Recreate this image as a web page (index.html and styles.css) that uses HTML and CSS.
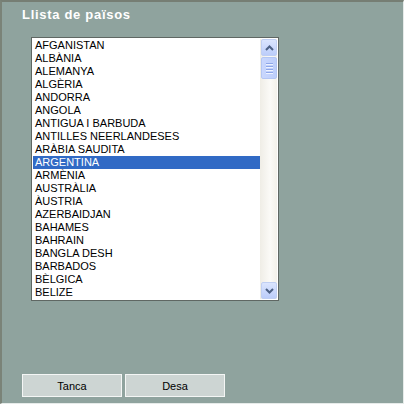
FILE: index.html
```html
<!DOCTYPE html>
<html>
<head>
<meta charset="utf-8">
<link rel="stylesheet" href="styles.css">
</head>
<body>
<div class="window">
  <div class="title">Llista de països</div>
  <div class="listbox">
    <ul class="items">
      <li>AFGANISTAN</li>
      <li>ALBÀNIA</li>
      <li>ALEMANYA</li>
      <li>ALGÈRIA</li>
      <li>ANDORRA</li>
      <li>ANGOLA</li>
      <li>ANTIGUA I BARBUDA</li>
      <li>ANTILLES NEERLANDESES</li>
      <li>ARÀBIA SAUDITA</li>
      <li class="selected">ARGENTINA</li>
      <li>ARMÈNIA</li>
      <li>AUSTRÀLIA</li>
      <li>ÀUSTRIA</li>
      <li>AZERBAIDJAN</li>
      <li>BAHAMES</li>
      <li>BAHRAIN</li>
      <li>BANGLA DESH</li>
      <li>BARBADOS</li>
      <li>BÈLGICA</li>
      <li>BELIZE</li>
    </ul>
    <div class="scrollbar">
      <div class="sbtn">
        <svg width="9" height="6" viewBox="0 0 9 6"><polyline points="1,5 4.5,1.5 8,5" fill="none" stroke="#4d6185" stroke-width="2"/></svg>
      </div>
      <div class="thumb">
        <span></span><span></span><span></span><span></span>
      </div>
      <div class="track"></div>
      <div class="sbtn">
        <svg width="9" height="6" viewBox="0 0 9 6"><polyline points="1,1 4.5,4.5 8,1" fill="none" stroke="#4d6185" stroke-width="2"/></svg>
      </div>
    </div>
  </div>
  <div class="buttons">
    <button class="btn">Tanca</button>
    <button class="btn">Desa</button>
  </div>
</div>
</body>
</html>
```

FILE: styles.css
```css
html, body {
  margin: 0;
  padding: 0;
}
body {
  width: 404px;
  height: 404px;
  overflow: hidden;
  background: #8fa39e;
}
.window {
  box-sizing: border-box;
  width: 404px;
  height: 404px;
  background: #8fa39e;
  border-top: 2px solid #767e74;
  border-left: 2px solid #7a8378;
  border-right: 1px solid #e6ebe9;
  border-bottom: 1px solid #e6ebe9;
  display: flex;
  flex-direction: column;
  padding: 5px 0 0 20px;
}
.title {
  font-family: "Liberation Sans", Arial, sans-serif;
  font-weight: bold;
  font-size: 13px;
  letter-spacing: 0.7px;
  line-height: 16px;
  color: #ffffff;
}
.listbox {
  margin: 14px 0 0 9px;
  width: 248px;
  height: 264px;
  box-sizing: border-box;
  border: 1px solid #5f6763;
  padding: 1px;
  background: #ffffff;
  display: flex;
}
.items {
  list-style: none;
  margin: 0;
  padding: 0;
  flex: 1;
  overflow: hidden;
  font-family: "Liberation Sans", Arial, sans-serif;
  font-size: 11px;
  line-height: 13px;
  color: #000000;
}
.items li {
  height: 13px;
  padding-left: 2px;
  white-space: nowrap;
}
.items li.selected {
  background: #316ac5;
  color: #ffffff;
}
.scrollbar {
  width: 17px;
  display: flex;
  flex-direction: column;
  background: linear-gradient(to right, #efede6, #fbfaf7 60%, #f3f1ea);
}
.sbtn {
  box-sizing: border-box;
  width: 16px;
  height: 17px;
  margin-left: 1px;
  border: 1px solid #c0cff3;
  border-radius: 2px;
  background: linear-gradient(to bottom, #dbe5fe, #bccdfa);
  display: flex;
  align-items: center;
  justify-content: center;
}
.thumb {
  box-sizing: border-box;
  width: 16px;
  height: 22px;
  margin-left: 1px;
  margin-top: 1px;
  border: 1px solid #b3c6f4;
  border-radius: 2px;
  background: linear-gradient(to right, #c9d7fd, #bdcefb);
  display: flex;
  flex-direction: column;
  align-items: center;
  justify-content: center;
  gap: 1px;
}
.thumb span {
  display: block;
  width: 7px;
  height: 1px;
  background: #8ea7e9;
  border-bottom: 1px solid #eef3ff;
}
.track {
  flex: 1;
}
.buttons {
  display: flex;
  gap: 3px;
  margin-top: 73px;
}
.btn {
  box-sizing: border-box;
  width: 100px;
  height: 23px;
  margin: 0;
  padding: 0;
  border: 1px solid #f4f6f5;
  background: #cdd5d3;
  font-family: "Liberation Sans", Arial, sans-serif;
  font-size: 11px;
  color: #000000;
}
```
